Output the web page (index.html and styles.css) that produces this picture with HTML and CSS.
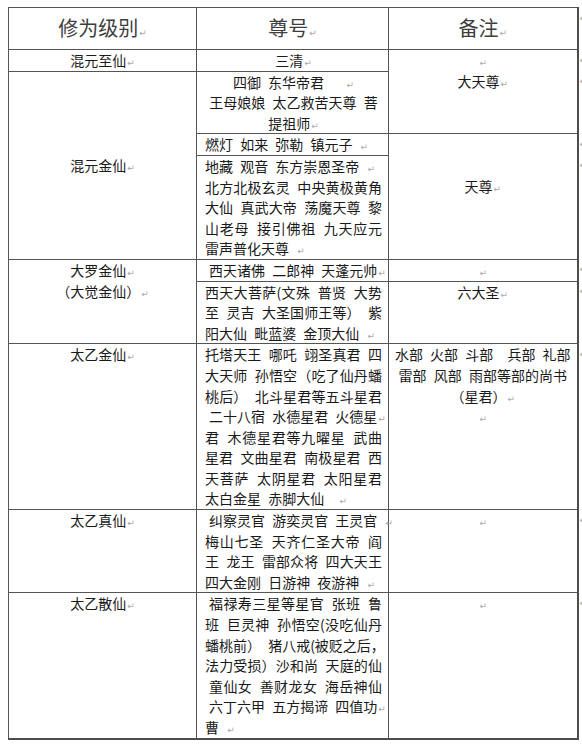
FILE: index.html
```html
<!DOCTYPE html>
<html lang="zh">
<head>
<meta charset="utf-8">
<title>修为级别</title>
<link rel="stylesheet" href="styles.css">
</head>
<body>
<table class="grid">
  <colgroup><col class="c1"><col class="c2"><col class="c3"><col class="c4"></colgroup>
  <thead>
    <tr class="head">
      <th>修为级别<span class="pm">↵</span></th>
      <th>尊号<span class="pm">↵</span></th>
      <th>备注<span class="pm">↵</span></th>
      <td class="eor"><div>↵</div></td>
    </tr>
  </thead>
  <tbody>
    <tr>
      <td class="lvl">混元至仙<span class="pm">↵</span></td>
      <td class="names ctr">三清<span class="pm">↵</span></td>
      <td class="note" rowspan="2"><div><span class="pm">↵</span></div><div>大天尊<span class="pm">↵</span></div></td>
      <td class="eor"><div>↵</div></td>
    </tr>
    <tr>
      <td class="lvl mid" rowspan="3">混元金仙<span class="pm">↵</span></td>
      <td class="names ctr">
        <div>四御 东华帝君 &nbsp;&nbsp;<span class="pm">↵</span></div>
        <div>王母娘娘 太乙救苦天尊 菩</div>
        <div>提祖师<span class="pm">↵</span></div>
      </td>
      <td class="eor"><div>↵</div></td>
    </tr>
    <tr>
      <td class="names">燃灯 如来 弥勒 镇元子 <span class="pm">↵</span></td>
      <td class="note mid pad1" rowspan="2">天尊<span class="pm">↵</span></td>
      <td class="eor"><div>↵</div></td>
    </tr>
    <tr>
      <td class="names">
        <div>地藏 观音 东方崇恩圣帝 <span class="pm">↵</span></div>
        <div class="j">北方北极玄灵 中央黄极黄角</div>
        <div class="j">大仙 真武大帝 荡魔天尊 黎</div>
        <div class="j">山老母 接引佛祖 九天应元</div>
        <div>雷声普化天尊 <span class="pm">↵</span></div>
      </td>
      <td class="eor"><div>↵</div></td>
    </tr>
    <tr>
      <td class="lvl" rowspan="2"><div>大罗金仙<span class="pm">↵</span></div><div>（大觉金仙）<span class="pm">↵</span></div></td>
      <td class="names"><div class="ind">西天诸佛 二郎神 天蓬元帅<span class="pm">↵</span></div></td>
      <td class="note"><span class="pm">↵</span></td>
      <td class="eor"><div>↵</div></td>
    </tr>
    <tr>
      <td class="names">
        <div class="j">西天大菩萨(文殊 普贤 大势</div>
        <div class="j">至 灵吉 大圣国师王等） 紫</div>
        <div>阳大仙 毗蓝婆 金顶大仙 <span class="pm">↵</span></div>
      </td>
      <td class="note">六大圣<span class="pm">↵</span></td>
      <td class="eor"><div>↵</div></td>
    </tr>
    <tr>
      <td class="lvl">太乙金仙<span class="pm">↵</span></td>
      <td class="names">
        <div class="j">托塔天王 哪吒 翊圣真君 四</div>
        <div class="j">大天师 孙悟空（吃了仙丹蟠</div>
        <div class="j">桃后） 北斗星君等五斗星君</div>
        <div class="ind">二十八宿 水德星君 火德星<span class="pm">↵</span></div>
        <div class="j">君 木德星君等九曜星 武曲</div>
        <div class="j">星君 文曲星君 南极星君 西</div>
        <div class="j">天菩萨 太阴星君 太阳星君</div>
        <div>太白金星 赤脚大仙 &nbsp;<span class="pm">↵</span></div>
      </td>
      <td class="note">
        <div>水部 火部 斗部 &nbsp;兵部 礼部</div>
        <div>雷部 风部 雨部等部的尚书</div>
        <div>（星君）<span class="pm">↵</span></div>
        <div><span class="pm">↵</span></div>
      </td>
      <td class="eor"><div>↵</div></td>
    </tr>
    <tr>
      <td class="lvl">太乙真仙<span class="pm">↵</span></td>
      <td class="names">
        <div class="ind">纠察灵官 游奕灵官 王灵官 <span class="pm">↵</span></div>
        <div class="j">梅山七圣 天齐仁圣大帝 阎</div>
        <div class="j">王 龙王 雷部众将 四大天王</div>
        <div>四大金刚 日游神 夜游神 <span class="pm">↵</span></div>
      </td>
      <td class="note"><span class="pm">↵</span></td>
      <td class="eor"><div>↵</div></td>
    </tr>
    <tr class="last">
      <td class="lvl">太乙散仙<span class="pm">↵</span></td>
      <td class="names">
        <div class="j ind">福禄寿三星等星官 张班 鲁</div>
        <div class="j">班 巨灵神 孙悟空(没吃仙丹</div>
        <div class="j">蟠桃前） 猪八戒(被贬之后，</div>
        <div class="j">法力受损）沙和尚 天庭的仙</div>
        <div class="j ind">童仙女 善财龙女 海岳神仙</div>
        <div class="ind">六丁六甲 五方揭谛 四值功<span class="pm">↵</span></div>
        <div>曹 <span class="pm">↵</span></div>
      </td>
      <td class="note"><span class="pm">↵</span></td>
      <td class="eor"><div>↵</div></td>
    </tr>
  </tbody>
</table>
</body>
</html>
```

FILE: styles.css
```css
html, body {
  margin: 0;
  padding: 0;
  background: #ffffff;
  overflow: hidden;
}

body {
  font-family: "Noto Sans CJK SC", "Noto Sans", sans-serif;
  color: #1a1a1a;
  word-spacing: 4px;
}

.grid {
  border-collapse: collapse;
  table-layout: fixed;
  width: 574px;
  margin: 7px 0 0 8px;
}

col.c1 { width: 188px; }
col.c2 { width: 192px; }
col.c3 { width: 189px; }
col.c4 { width: 5px; }

.grid th,
.grid td {
  border: 1px solid #555555;
  padding: 0;
  font-size: 14px;
  line-height: 20.6px;
  vertical-align: top;
  font-weight: normal;
  white-space: nowrap;
}

.grid th:nth-child(3),
.grid td.note {
  border-right: 2px solid #4d4d4d;
}

.grid tr.last td {
  border-bottom: 2px solid #4d4d4d;
}

.grid td.eor {
  border: none;
  overflow: hidden;
}

.grid tr.last td.eor {
  border-bottom: none;
}

.eor div {
  width: 5px;
  overflow: hidden;
  font-family: "DejaVu Sans", sans-serif;
  font-size: 9px;
  line-height: 20.6px;
  color: #aaaaaa;
  padding-left: 1px;
}

.head th {
  height: 41px;
  font-size: 20px;
  color: #3e3e3e;
  text-align: center;
  vertical-align: middle;
}

.pm {
  font-family: "DejaVu Sans", sans-serif;
  font-size: 9px;
  line-height: 0;
  color: #a8a8a8;
  word-spacing: 0;
  margin-left: 1px;
}

.lvl {
  text-align: center;
}

.mid {
  vertical-align: middle !important;
}

.pad1 {
  padding-bottom: 21px !important;
}

.names {
  padding: 0 6px 0 8px !important;
}

.ctr {
  text-align: center;
}

.names .j {
  text-align: justify;
  text-align-last: justify;
}

.names .ind {
  padding-left: 4px;
}

.note {
  text-align: center;
}
```
